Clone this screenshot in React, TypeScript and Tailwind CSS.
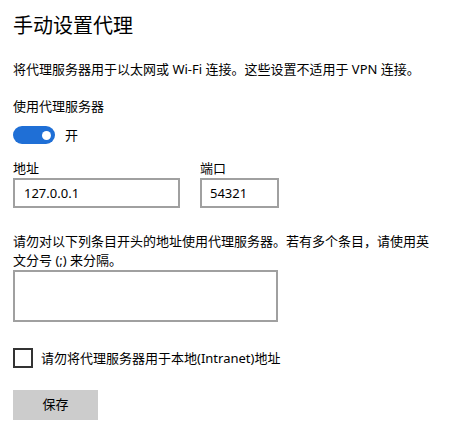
export default function App() {
    return (
        <div className="min-h-[440px] bg-white text-black pl-[13px] pt-[12px]" style={{ fontFamily: '"Noto Sans", "Noto Sans CJK SC", sans-serif' }}>
            <h1 className="text-[20px] leading-[28px]">手动设置代理</h1>
            <p className="mt-[19px] text-[13px] leading-[20px]">将代理服务器用于以太网或 Wi-Fi 连接。这些设置不适用于 VPN 连接。</p>
            <div className="mt-[17px] text-[13px] leading-[20px]">使用代理服务器</div>
            <div className="mt-[10px] flex items-center gap-[10px]">
                <div className="w-[42px] h-[18px] rounded-full bg-[#1f6fd6] flex items-center justify-end pr-[4px]">
                    <div className="w-[9px] h-[9px] rounded-full bg-white" />
                </div>
                <span className="text-[13px] leading-[18px]">开</span>
            </div>
            <div className="mt-[14px] flex gap-[20px]">
                <div className="flex flex-col">
                    <label className="text-[13px] leading-[20px]">地址</label>
                    <input readOnly defaultValue="127.0.0.1" className="w-[167px] h-[30px] border-2 border-[#a0a0a0] pl-[9px] text-[13px] outline-none" />
                </div>
                <div className="flex flex-col">
                    <label className="text-[13px] leading-[20px]">端口</label>
                    <input readOnly defaultValue="54321" className="w-[79px] h-[30px] border-2 border-[#a0a0a0] pl-[8px] text-[13px] outline-none" />
                </div>
            </div>
            <p className="mt-[24px] w-[422px] text-[13px] leading-[19px]">请勿对以下列条目开头的地址使用代理服务器。若有多个条目，请使用英文分号 (;) 来分隔。</p>
            <textarea readOnly className="block w-[265px] h-[52px] border-2 border-[#a0a0a0] resize-none outline-none" />
            <div className="mt-[26px] flex items-center gap-[8px]">
                <div className="w-[20px] h-[20px] border-2 border-[#333333]" />
                <span className="text-[13px] leading-[20px]">请勿将代理服务器用于本地(Intranet)地址</span>
            </div>
            <button className="mt-[22px] w-[85px] h-[30px] bg-[#cccccc] text-[13px]">保存</button>
        </div>
    )
}
